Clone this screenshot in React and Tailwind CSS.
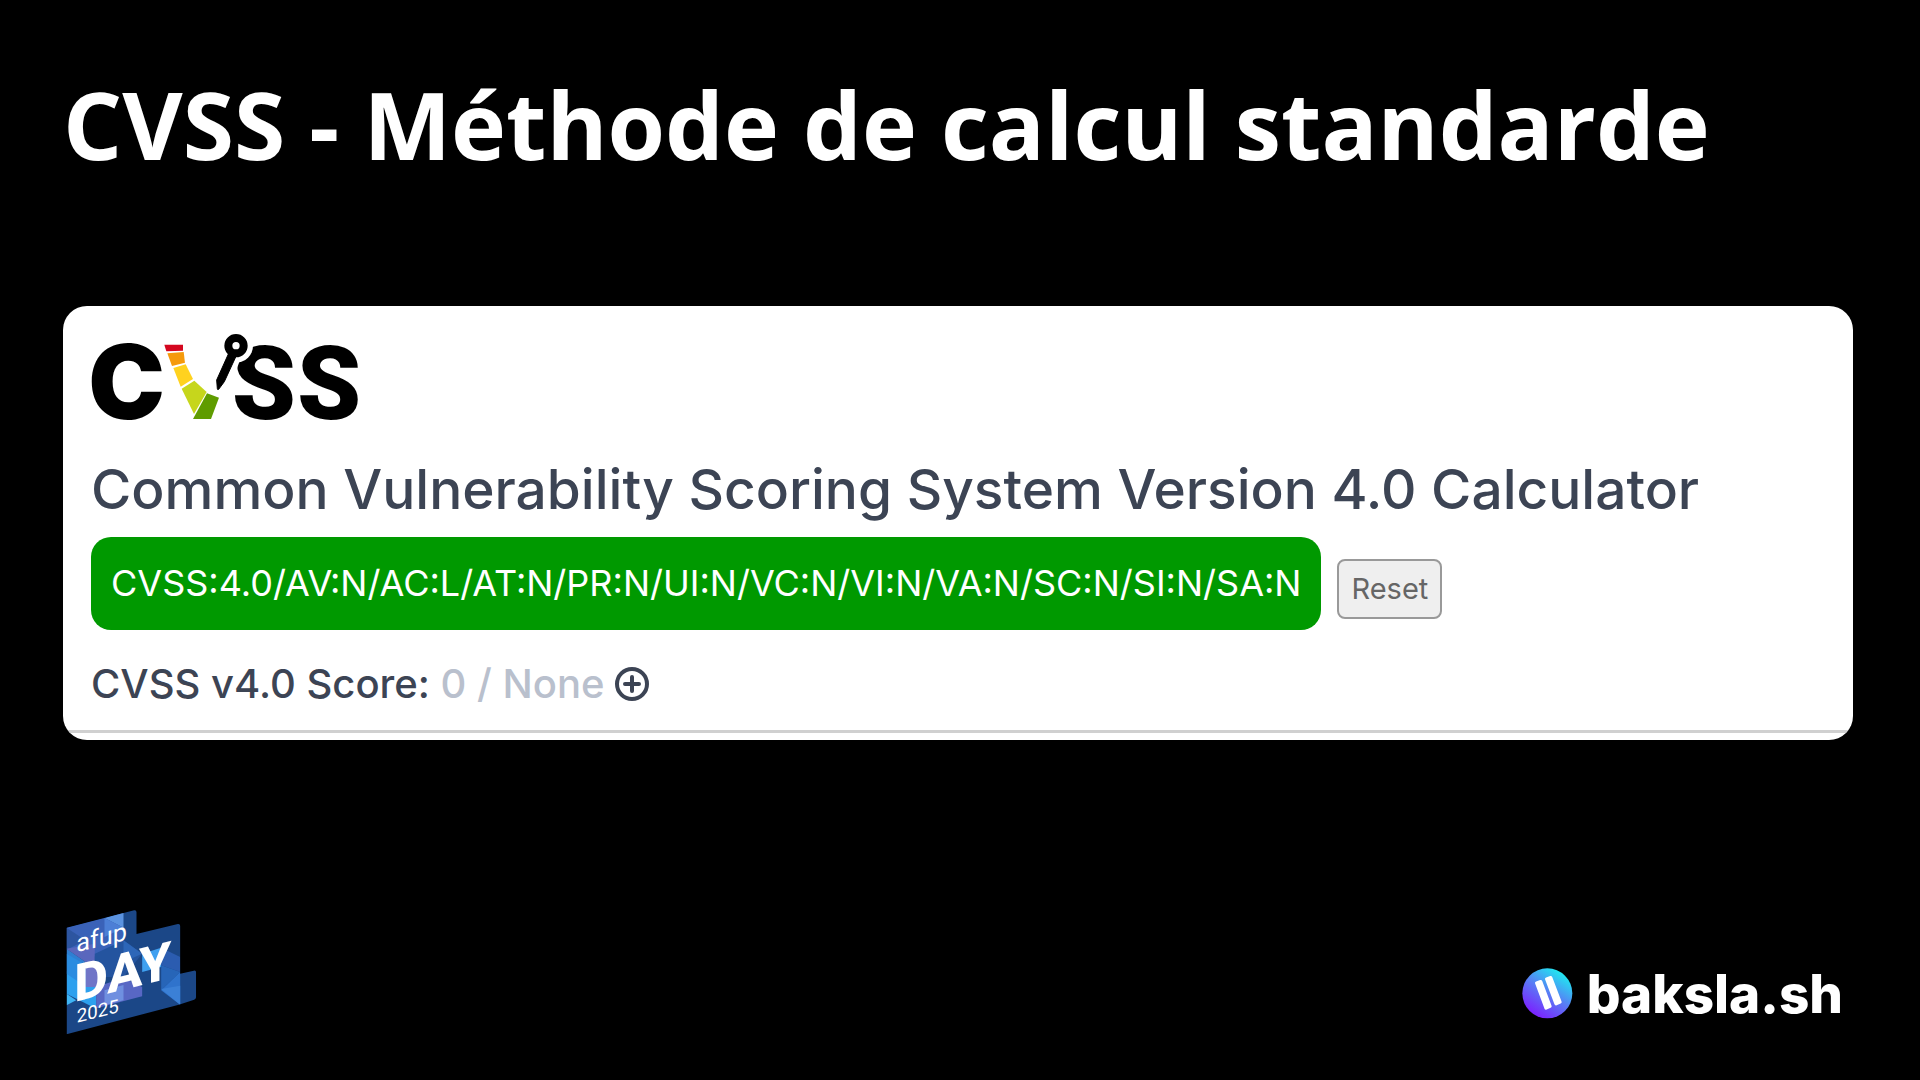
const VECTOR = "CVSS:4.0/AV:N/AC:L/AT:N/PR:N/UI:N/VC:N/VI:N/VA:N/SC:N/SI:N/SA:N";

const CvssLogo = () => (
  <svg viewBox="90 90 810 282" className="h-[94px] w-[270px] overflow-visible" role="img" aria-label="CVSS">
    <g fill="#000">
      <text x="82" y="357" fontSize="308" className="font-['Inter',sans-serif] font-black">C</text>
      <text x="512" y="357" fontSize="308" className="font-['Roboto',sans-serif] font-black">S</text>
      <text x="708" y="357" fontSize="308" className="font-['Roboto',sans-serif] font-black">S</text>
    </g>

    {/* Severity scale */}
    <polygon points="310,134 366,134 366,152 316,154" fill="#d4071f" />
    <polygon points="319,160 368,156 372,188 333,198" fill="#f59a0b" />
    <polygon points="337,204 374,193 396,237 359,260" fill="#ffd21f" />
    <polygon points="362,266 400,242 437,276 399,342" fill="#c6d61c" />
    <polygon points="438,280 474,293 450,357 396,357" fill="#5f9c00" />

    {/* Needle */}
    <path d="M526 137 L482 252" stroke="#fff" strokeWidth="52" />
    <circle cx="525" cy="137" r="51" fill="#fff" />
    <path
      d="M503 160 L525 169 L490 245 L473 268 Q469 270 469 266 L467 240 Z"
      fill="#000"
      stroke="#000"
      strokeWidth="3"
      strokeLinejoin="round"
    />
    <circle cx="525" cy="137" r="23" fill="none" stroke="#000" strokeWidth="24" />
  </svg>
);

const AfupLogo = () => (
  <svg viewBox="50 59 392 375" className="h-[125px] w-[131px] overflow-visible" role="img" aria-label="afup Day 2025">
    <defs>
      <clipPath id="afup-shape">
        <path d="M51 112 L254 60 Q261 59 261 66 V131 L385 101 Q392 100 392 107 V250 L433 241 Q440 240 440 247 V319 Q440 325 434 328 L388 343 L51 432 Z" />
      </clipPath>
    </defs>
    <g clipPath="url(#afup-shape)">
      <rect x="50" y="59" width="392" height="375" fill="#1b4787" />
      <polygon points="51,112 165,83 222,112 222,160 108,210 51,175" fill="#3a62b8" />
      <polygon points="51,112 108,150 51,178" fill="#2d55a0" />
      <polygon points="165,83 222,66 222,112" fill="#5b93e0" />
      <polygon points="165,83 222,112 165,140" fill="#4c7fd6" />
      <polygon points="51,175 108,215 51,240" fill="#2f7fd2" />
      <polygon points="51,175 136,160 136,250 108,215" fill="#5a67bd" />
      <polygon points="51,240 140,290 140,355 51,310" fill="#2da0ee" />
      <polygon points="51,190 110,225 110,290 51,250" fill="#2b8ce0" />
      <polygon points="136,190 222,150 278,190 222,260 136,260" fill="#24549f" />
      <polygon points="222,150 278,190 222,215" fill="#2d66b8" />
      <polygon points="108,215 160,240 160,290 108,290" fill="#7075c7" />
      <polygon points="140,290 222,262 278,290 278,318 140,354" fill="#5867c4" />
      <polygon points="165,300 222,284 222,330 165,345" fill="#6f8fe0" />
      <polygon points="51,310 80,330 51,345" fill="#3eb4f5" />
      <polygon points="278,190 335,172 335,230 278,245" fill="#3fa0f0" />
      <polygon points="335,172 392,200 392,245 335,225" fill="#2b5cb0" />
      <polygon points="335,225 392,245 335,300" fill="#2765b8" />
      <polygon points="335,300 392,245 392,343" fill="#2f73cc" />
      <polygon points="335,296 392,286 392,343" fill="#3b80d6" />
    </g>
    <g fill="#fff" className="font-['Roboto',sans-serif]">
      <text transform="translate(80 186) skewY(-14)" fontSize="76">afup</text>
      <text transform="translate(74 335) skewY(-14)" fontSize="156" className="font-extrabold">DAY</text>
      <text transform="translate(82 397) skewY(-14)" fontSize="56">2025</text>
    </g>
  </svg>
);

const BakslaLogo = () => (
  <svg viewBox="60 56 153 153" className="size-[51px]" aria-hidden="true">
    <defs>
      <linearGradient id="baksla-fill" x1="0.2" y1="0.95" x2="0.8" y2="0.05">
        <stop offset="0" stopColor="#7d1bff" />
        <stop offset="0.5" stopColor="#5a7af5" />
        <stop offset="1" stopColor="#1cf0f0" />
      </linearGradient>
    </defs>
    <circle cx="136" cy="132" r="75" fill="url(#baksla-fill)" />
    <g fill="#fff" stroke="#fff" strokeWidth="10" strokeLinejoin="round">
      <polygon points="104,101 116,97 144,171 132,176" />
      <polygon points="134,89 146,85 174,158 162,163" />
    </g>
  </svg>
);

const App = () => {
  return (
    <main className="flex min-h-screen flex-col bg-black pt-[60px] pr-[67px] pb-[45px] pl-[63px] font-['Inter',sans-serif]">
      <h1 className="font-['Open_Sans',sans-serif] text-[93px] leading-[128px] font-bold text-white">
        CVSS - Méthode de calcul standarde
      </h1>

      {/* Calculator card */}
      <section className="mt-[118px] overflow-hidden rounded-3xl bg-white pt-6 pb-[7px] text-[#3c4454]">
        <div className="px-7">
          <CvssLogo />
          <h2 className="mt-8 text-[55px] leading-[66px] font-medium">
            Common Vulnerability Scoring System Version 4.0 Calculator
          </h2>
          <div className="mt-[15px] flex items-center gap-4">
            <button type="button" className="rounded-[20px] bg-[#009900] px-5 text-[36px] leading-[93px] text-white">
              {VECTOR}
            </button>
            <button
              type="button"
              className="mt-2.5 rounded-lg border-2 border-[#999] bg-[#efefef] px-3 text-[29px] leading-[56px] text-[#666]"
            >
              Reset
            </button>
          </div>
          <div className="mt-6 flex items-center gap-2.5">
            <h3 className="text-[40px] leading-[60px] font-medium">
              CVSS v4.0 Score: <span className="text-[#b9c0cd]">0 / None</span>
            </h3>
            <button type="button" aria-label="Show details">
              <svg viewBox="0 0 36 36" className="size-9" fill="none" stroke="currentColor" strokeWidth="4">
                <circle cx="18" cy="18" r="15" />
                <path d="M18 11v14M11 18h14" strokeLinecap="round" />
              </svg>
            </button>
          </div>
        </div>
        <hr className="mt-4 border-t-[3px] border-[#d0d0d0]" />
      </section>

      <footer className="mt-auto flex items-end justify-between pr-2.5 pl-[3px]">
        <AfupLogo />
        <div className="mb-4 flex items-center gap-3.5 text-white">
          <BakslaLogo />
          <span className="text-[53px] leading-[50px] font-extrabold">baksla.sh</span>
        </div>
      </footer>
    </main>
  );
};

export default App;
